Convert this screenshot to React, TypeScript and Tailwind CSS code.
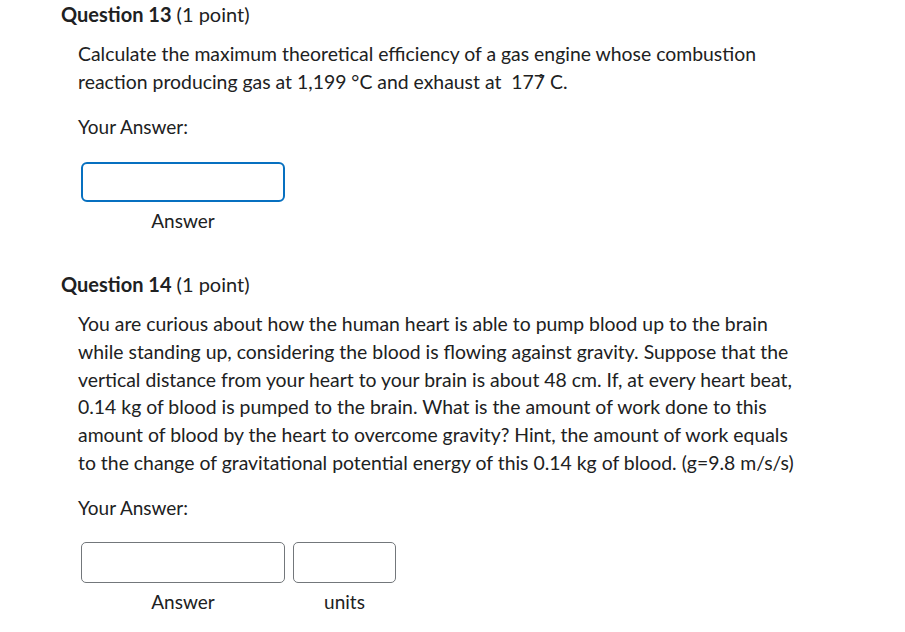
export default function App() {
  return (
    <div className="min-h-screen bg-white text-[#202122]" style={{ fontFamily: "Lato, 'Noto Sans', sans-serif" }}>
      <div className="pl-[61px] pt-[1px]">
        <h2 className="text-[20px] leading-[26px]">
          <span className="font-bold">Question 13</span> (1 point)
        </h2>
        <div className="pl-[17px] pt-[13px] text-[19px] leading-[28px]">
          <p className="text-[19.4px]">
            Calculate the maximum theoretical efficiency of a gas engine whose combustion
            <br />
            reaction producing gas at 1,199 °C and exhaust at&nbsp; 177&#778; C.
          </p>
          <p className="mt-[17px]">Your Answer:</p>
          <div className="mt-[21px] pl-[3px]">
            <div className="w-[204px]">
              <div className="h-[40px] rounded-[6px] border-2 border-[#0770c0] bg-white"></div>
              <div className="mt-[5px] text-center leading-[28px]">Answer</div>
            </div>
          </div>
        </div>
        <h2 className="mt-[36px] text-[20px] leading-[26px]">
          <span className="font-bold">Question 14</span> (1 point)
        </h2>
        <div className="pl-[17px] pt-[13px] text-[19px] leading-[27.8px]">
          <p className="text-[19.4px]">
            You are curious about how the human heart is able to pump blood up to the brain
            <br />
            while standing up, considering the blood is flowing against gravity. Suppose that the
            <br />
            vertical distance from your heart to your brain is about 48 cm. If, at every heart beat,
            <br />
            0.14 kg of blood is pumped to the brain. What is the amount of work done to this
            <br />
            amount of blood by the heart to overcome gravity? Hint, the amount of work equals
            <br />
            to the change of gravitational potential energy of this 0.14 kg of blood. (g=9.8 m/s/s)
          </p>
          <p className="mt-[17px] leading-[28px]">Your Answer:</p>
          <div className="mt-[20px] flex gap-[8px] pl-[3px]">
            <div className="w-[204px]">
              <div className="h-[41px] rounded-[5px] border border-[#73777b] bg-white"></div>
              <div className="mt-[5px] text-center leading-[28px]">Answer</div>
            </div>
            <div className="w-[103px]">
              <div className="h-[41px] rounded-[5px] border border-[#73777b] bg-white"></div>
              <div className="mt-[5px] text-center leading-[28px]">units</div>
            </div>
          </div>
        </div>
      </div>
    </div>
  );
}
